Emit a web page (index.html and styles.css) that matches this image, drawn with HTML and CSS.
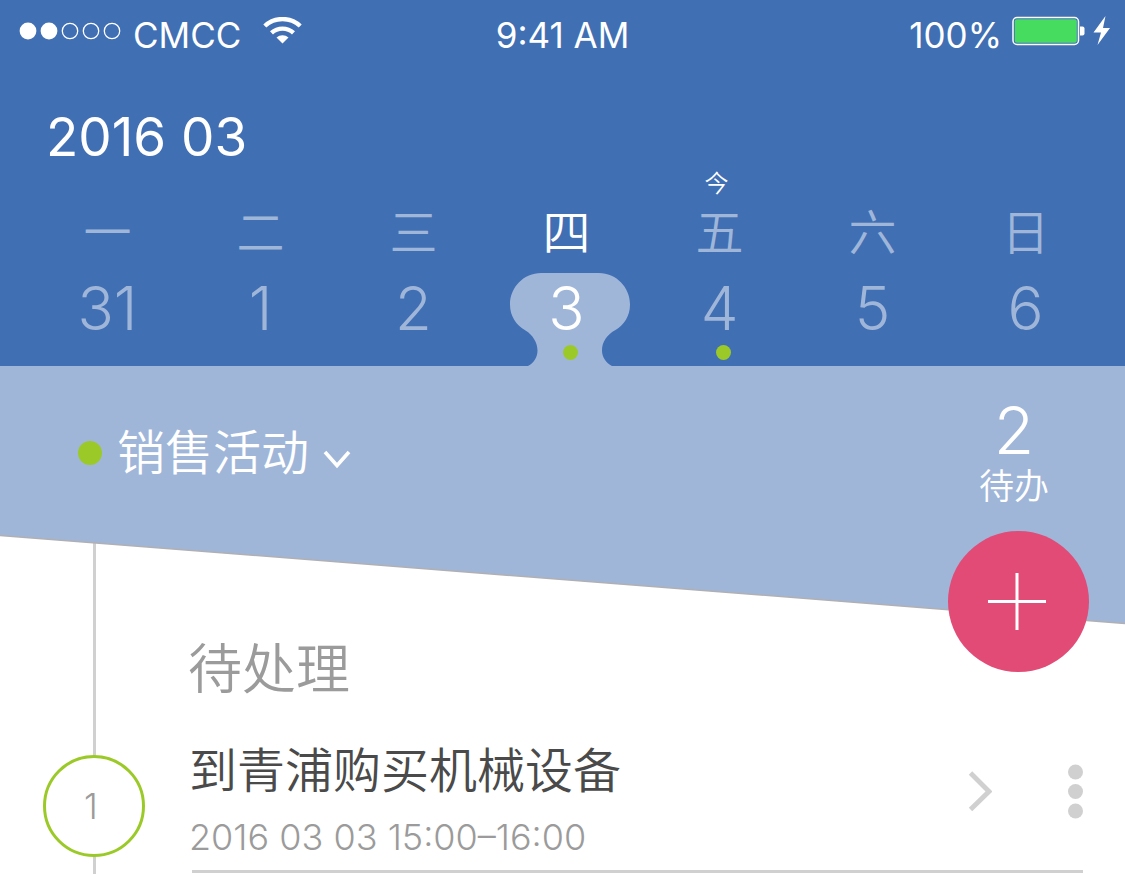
FILE: index.html
```html
<!DOCTYPE html>
<html lang="zh-CN">
<head>
<meta charset="utf-8">
<meta name="viewport" content="width=device-width, initial-scale=1">
<title>日程</title>
<link rel="stylesheet" href="styles.css">
</head>
<body>
<header class="header">
  <div class="status">
    <div class="status-left">
      <svg class="signal" viewBox="0 0 102 18" aria-hidden="true">
        <g fill="#fff"><circle cx="9" cy="9" r="8.4"/><circle cx="30" cy="9" r="8.4"/></g>
        <g fill="none" stroke="#fff" stroke-width="1.3"><circle cx="51" cy="9" r="7.7"/><circle cx="72" cy="9" r="7.7"/><circle cx="93" cy="9" r="7.7"/></g>
      </svg>
      <span class="status-text">CMCC</span>
      <svg class="wifi" viewBox="0 0 40 28" aria-hidden="true">
        <g fill="none" stroke="#fff" stroke-width="4.4"><path d="M1.8 9A26 26 0 0 1 37.2 9"/><path d="M8.5 15.900A16.2 16.2 0 0 1 30.5 15.900"/></g>
        <path d="M13.500 20.400a9.3 9.3 0 0 1 12 0L19.500 26.500z" fill="#fff"/>
      </svg>
    </div>
    <span class="status-text">9:41 AM</span>
    <div class="status-right">
      <span class="status-text">100%</span>
      <svg class="battery" viewBox="0 0 100 30" aria-hidden="true">
        <rect x="1" y="1.500" width="65.500" height="27" rx="4" fill="none" stroke="#fff" stroke-width="1.500"/>
        <rect x="2.800" y="3.300" width="62" height="23.400" rx="2" fill="#46dc60"/>
        <path d="M68 10.500h2.500q2 0 2 2v5q0 2-2 2H68z" fill="#fff"/>
        <path d="M93.500 0 81.500 16.500H89L85.500 29 98 12H91z" fill="#fff"/>
      </svg>
    </div>
  </div>
  <h1 class="month">2016 03</h1>
  <nav class="week" aria-label="日期">
    <button class="day" type="button"><span class="tag"></span><span class="weekday">一</span><span class="date">31</span><span class="mark"></span></button>
    <button class="day" type="button"><span class="tag"></span><span class="weekday">二</span><span class="date">1</span><span class="mark"></span></button>
    <button class="day" type="button"><span class="tag"></span><span class="weekday">三</span><span class="date">2</span><span class="mark"></span></button>
    <button class="day day-selected" type="button" aria-current="date">
      <svg class="bubble" viewBox="0 0 153 93" aria-hidden="true"><path d="M51 0H109C126 0 140 14 140 31.500C140 43 134 52 125.500 57C117 61.500 112 69 112 77.500C112 84 116 90 122 93H38C44 90 47.500 84 47.500 77.500C47.500 70 43 62 35.500 57.500C26 52 20 43 20 31.500C20 14 34 0 51 0Z" fill="#9fb6d9"/></svg>
      <span class="tag"></span><span class="weekday">四</span><span class="date">3</span><span class="mark"><i class="dot"></i></span></button>
    <button class="day" type="button"><span class="tag">今</span><span class="weekday">五</span><span class="date">4</span><span class="mark"><i class="dot"></i></span></button>
    <button class="day" type="button"><span class="tag"></span><span class="weekday">六</span><span class="date">5</span><span class="mark"></span></button>
    <button class="day" type="button"><span class="tag"></span><span class="weekday">日</span><span class="date">6</span><span class="mark"></span></button>
  </nav>
</header>

<section class="panel">
  <svg class="slope" viewBox="0 0 1125 260" preserveAspectRatio="none" aria-hidden="true">
    <path d="M0 0H1125V257.500L0 169.500Z" fill="#9fb6d9"/>
    <path d="M0 169.500L1125 257.500" stroke="#b0b0b4" stroke-width="1.500"/>
  </svg>
  <button class="category" type="button">
    <i class="category-dot"></i>
    <span>销售活动</span>
    <svg class="chevron" viewBox="0 0 28 20" aria-hidden="true"><path d="M2 2 14 15.500 26 2" fill="none" stroke="#fff" stroke-width="3.600"/></svg>
  </button>
  <div class="todo">
    <span class="todo-count">2</span>
    <span class="todo-label">待办</span>
  </div>
  <button class="add" type="button" aria-label="添加">
    <svg class="plus" viewBox="0 0 58 58" aria-hidden="true"><path d="M29 0V57M0 28.500H58" stroke="#fff" stroke-width="3"/></svg>
  </button>
</section>

<main class="timeline">
  <h2 class="group">待处理</h2>
  <article class="task">
    <div class="badge">1</div>
    <div class="task-body">
      <div class="task-text">
        <h3 class="task-title">到青浦购买机械设备</h3>
        <time class="task-time">2016 03 03 15:00–16:00</time>
      </div>
      <button class="icon-button" type="button" aria-label="详情">
        <svg class="arrow" viewBox="0 0 24 40" aria-hidden="true"><path d="M2.500 2 21 20.500 2.500 38.500" fill="none" stroke="#d0d0d0" stroke-width="4.900"/></svg>
      </button>
      <button class="icon-button" type="button" aria-label="更多">
        <svg class="more" viewBox="0 0 16 56" aria-hidden="true"><g fill="#d0d0d0"><circle cx="8.500" cy="9" r="7.500"/><circle cx="8.500" cy="28.500" r="7.500"/><circle cx="8.500" cy="48" r="7.500"/></g></svg>
      </button>
    </div>
  </article>
</main>
</body>
</html>
```
FILE: styles.css
```css
* {
  box-sizing: border-box;
}

body {
  margin: 0;
  min-height: 100vh;
  display: flex;
  flex-direction: column;
  background: #fff;
  color: #4a4a4a;
  font-family: Inter, "Noto Sans CJK SC", sans-serif;
  font-weight: 350;
}

h1,
h2,
h3 {
  margin: 0;
  font-weight: 350;
}

button {
  margin: 0;
  padding: 0;
  border: 0;
  background: none;
  color: inherit;
  font: inherit;
  cursor: pointer;
}

svg {
  display: block;
}

.header {
  background: #406fb4;
  color: #fff;
}

.status {
  display: grid;
  grid-template-columns: 1fr auto 1fr;
  align-items: center;
  height: 70px;
  padding: 0 13px;
}

.status-left,
.status-right {
  display: flex;
  align-items: center;
  padding-bottom: 8px;
}

.status-right {
  justify-content: flex-end;
  gap: 10px;
}

.status-text {
  font-size: 35px;
  font-weight: 400;
  line-height: 40px;
}

.status-left .status-text,
.status-right .status-text {
  padding-top: 8px;
}

.signal {
  width: 102px;
  height: 18px;
  margin: 0 12px 0 6px;
}

.wifi {
  width: 40px;
  height: 28px;
  margin-left: 22px;
}

.battery {
  width: 100px;
  height: 30px;
}

.month {
  padding-left: 46px;
  font-size: 53px;
  font-weight: 400;
  line-height: 64px;
  margin-top: 35px;
}

.week {
  display: grid;
  grid-template-columns: repeat(7, 1fr);
  padding: 0 23px 0 31px;
}

.day {
  position: relative;
  display: flex;
  flex-direction: column;
  align-items: center;
  color: #9fb6d9;
}

.day-selected {
  color: #fff;
}

.bubble {
  position: absolute;
  left: 0;
  bottom: 0;
  width: 100%;
  height: 93px;
}

.tag {
  height: 30px;
  padding-right: 6px;
  color: #fff;
  font-size: 24px;
  line-height: 30px;
}

.weekday {
  font-size: 48px;
  line-height: 68px;
}

.date {
  position: relative;
  font-size: 60px;
  line-height: 82px;
}

.mark {
  position: relative;
  height: 17px;
  padding-left: 8px;
}

.dot {
  display: block;
  width: 15px;
  height: 15px;
  margin-top: -4px;
  border-radius: 50%;
  background: #9bca28;
}

.panel {
  position: relative;
  z-index: 1;
  display: flex;
  justify-content: space-between;
  align-items: flex-start;
  height: 260px;
  padding: 36px 76px 0 78px;
  color: #fff;
}

.slope {
  position: absolute;
  left: 0;
  top: 0;
  width: 100%;
  height: 260px;
}

.category {
  position: relative;
  display: flex;
  align-items: center;
  margin-top: 15px;
  font-size: 48px;
  line-height: 72px;
}

.category-dot {
  width: 24px;
  height: 24px;
  margin-right: 15px;
  border-radius: 50%;
  background: #9bca28;
}

.chevron {
  width: 28px;
  height: 20px;
  margin: 14px 0 0 14px;
}

.todo {
  position: relative;
  display: flex;
  flex-direction: column;
  align-items: center;
}

.todo-count {
  font-size: 66px;
  line-height: 56px;
}

.todo-label {
  font-size: 35px;
  line-height: 56px;
}

.add {
  position: absolute;
  right: 36px;
  top: 165px;
  width: 141px;
  height: 141px;
  padding-right: 4px;
  border-radius: 50%;
  background: #e14b76;
}

.plus {
  width: 58px;
  height: 58px;
  margin: 0 auto;
}

.timeline {
  flex: 1;
  margin-top: -88px;
  padding: 90px 42px 0 43px;
  background: linear-gradient(#d0d0d0, #d0d0d0) 93px 0 / 3px 100% no-repeat;
}

.group {
  padding-left: 145px;
  color: #9b9b9b;
  font-size: 54px;
  line-height: 84px;
}

.task {
  display: flex;
  gap: 47px;
  padding-top: 25px;
}

.badge {
  display: flex;
  align-items: center;
  justify-content: center;
  width: 102px;
  height: 102px;
  margin-top: 18px;
  padding-right: 6px;
  border: 3px solid #9bca28;
  border-radius: 50%;
  background: #fff;
  color: #9b9b9b;
  font-size: 35px;
}

.task-body {
  flex: 1;
  display: flex;
  align-items: center;
  gap: 75px;
  border-bottom: 3px solid #d0d0d0;
  padding-bottom: 11px;
}

.task-text {
  flex: 1;
  margin-left: -3px;
}

.task-title {
  font-size: 48px;
  line-height: 68px;
}

.task-time {
  display: block;
  padding-top: 10px;
  color: #9b9b9b;
  font-size: 36px;
  line-height: 44px;
}

.icon-button {
  margin-bottom: 14px;
}

.arrow {
  width: 24px;
  height: 40px;
}

.more {
  width: 16px;
  height: 56px;
}
```
